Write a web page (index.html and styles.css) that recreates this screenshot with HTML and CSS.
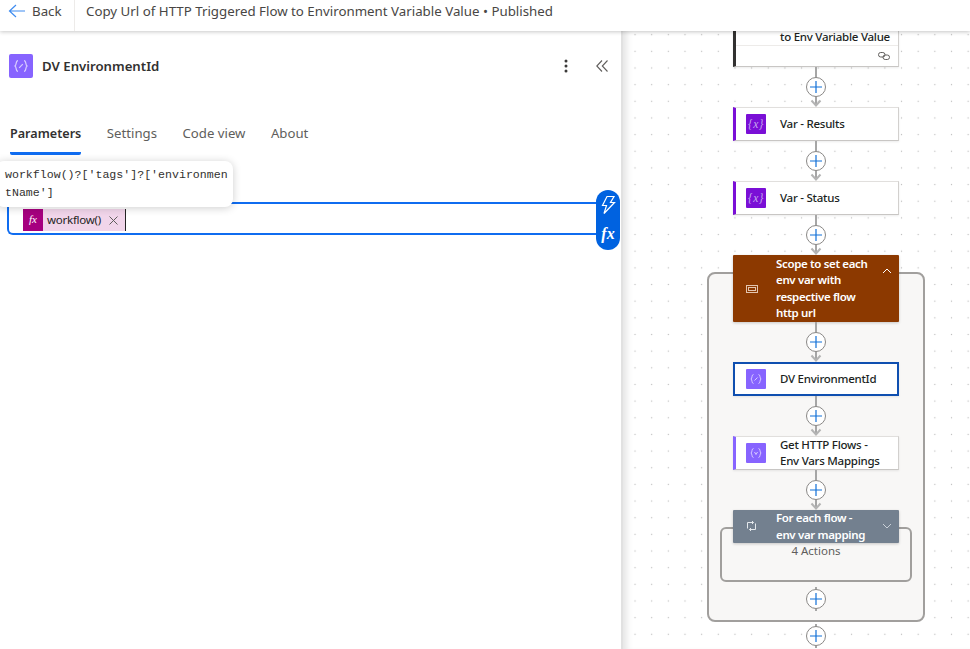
FILE: index.html
```html
<!DOCTYPE html>
<html lang="en">
<head>
<meta charset="utf-8">
<title>Copy Url of HTTP Triggered Flow to Environment Variable Value</title>
<link rel="stylesheet" href="styles.css">
</head>
<body>
<svg class="defs" width="0" height="0" aria-hidden="true">
  <defs>
    <symbol id="link" viewBox="0 0 24 40">
      <path d="M12 0V38" stroke="#a6a6a6" stroke-width="2" fill="none"/>
      <path d="M7.5 33.5L12 38.5L16.5 33.5" stroke="#b4b4b4" stroke-width="2" fill="none"/>
      <circle cx="12" cy="20" r="9.5" fill="#fff" stroke="#8a8886"/>
      <path d="M12 14V26M6 20H18" stroke="#1170d8" stroke-width="1.2" fill="none"/>
    </symbol>
    <symbol id="link-plain" viewBox="0 0 24 24">
      <path d="M12 0V24" stroke="#a6a6a6" stroke-width="2" fill="none"/>
      <circle cx="12" cy="12" r="9.5" fill="#fff" stroke="#8a8886"/>
      <path d="M12 6V18M6 12H18" stroke="#1170d8" stroke-width="1.2" fill="none"/>
    </symbol>
    <symbol id="braces" viewBox="0 0 20 20">
      <path d="M7.5 5.5C5.5 5.5 6.4 9.2 5 10C6.4 10.800 5.500 14.500 7.500 14.500M12.500 5.500C14.500 5.500 13.600 9.200 15 10C13.600 10.800 14.500 14.500 12.500 14.500" stroke="#d9ccff" fill="none"/>
    </symbol>
  </defs>
</svg>
<header class="topbar">
  <button class="back">
    <svg class="back-arrow" width="18" height="14" viewBox="0 0 18 14"><path d="M8 1L1.500 7L8 13M1.500 7H17" stroke="#3f8cf0" stroke-width="1.200" fill="none"/></svg>
    <span>Back</span>
  </button>
  <div class="flow-title">Copy Url of HTTP Triggered Flow to Environment Variable Value • Published</div>
</header>
<main class="main">
  <section class="panel">
    <div class="panel-head">
      <span class="panel-icon">
        <svg width="24" height="24" viewBox="0 0 20 20"><use href="#braces"/><path d="M8.500 11.500L11.500 8.500" stroke="#d9ccff" fill="none"/></svg>
      </span>
      <h1 class="panel-title">DV EnvironmentId</h1>
      <svg class="kebab" width="4" height="14" viewBox="0 0 4 14"><circle cx="2" cy="2" r="1.500"/><circle cx="2" cy="7" r="1.500"/><circle cx="2" cy="12" r="1.500"/></svg>
      <svg class="collapse" width="12" height="12" viewBox="0 0 12 12"><path d="M6 .5L.8 6L6 11.500M11.500 .5L6.300 6L11.500 11.500" stroke="#605e5c" stroke-width="1.100" fill="none"/></svg>
    </div>
    <nav class="tabs">
      <span class="tab tab-active">Parameters</span>
      <span class="tab">Settings</span>
      <span class="tab">Code view</span>
      <span class="tab">About</span>
    </nav>
    <div class="editor">
      <div class="tooltip">workflow()?['tags']?['environmentName']</div>
      <div class="input">
        <span class="token">
          <span class="token-icon">fx</span>
          <span class="token-label">workflow()</span>
          <svg class="token-x" width="9" height="9" viewBox="0 0 9 9"><path d="M.5 .5L8.500 8.500M8.500 .5L.5 8.500" stroke="#605e5c" fill="none"/></svg>
        </span>
        <span class="caret"></span>
      </div>
      <div class="pill">
        <svg width="18" height="20" viewBox="0 0 18 20"><path d="M8 1.500H15L11.500 7.500H15.500L5 18.500L7.500 10.500H3.500Z" stroke="#fff" stroke-width="1.200" fill="none"/></svg>
        <span class="pill-fx">fx</span>
      </div>
    </div>
  </section>
  <section class="canvas">
    <div class="flow">
      <div class="group"></div>
      <div class="loop"></div>
      <div class="card card-top bar-dark">
        <div class="card-top-text">to Env Variable Value</div>
        <div class="card-foot">
          <svg width="12" height="8" viewBox="0 0 12 8"><rect x=".5" y=".5" width="6.500" height="4.500" rx="2.200" stroke="#605e5c" fill="none"/><rect x="5" y="3" width="6.500" height="4.500" rx="2.200" stroke="#605e5c" fill="none"/></svg>
        </div>
      </div>
      <svg class="link"><use href="#link"/></svg>
      <div class="card bar-var">
        <span class="icon icon-var">{x}</span>
        <span class="label">Var - Results</span>
      </div>
      <svg class="link"><use href="#link"/></svg>
      <div class="card bar-var">
        <span class="icon icon-var">{x}</span>
        <span class="label">Var - Status</span>
      </div>
      <svg class="link"><use href="#link"/></svg>
      <div class="block block-scope">
        <svg class="block-icon" width="12" height="8" viewBox="0 0 12 8"><rect x=".5" y=".5" width="11" height="7" stroke="#e3c4ae" fill="none"/><rect x="2.500" y="2.500" width="7" height="3" stroke="#e3c4ae" fill="none"/></svg>
        <span class="block-text">Scope to set each<br>env var with<br>respective flow<br>http url</span>
        <svg class="chevron chevron-up" width="10" height="6" viewBox="0 0 10 6"><path d="M1 5L5 1L9 5" stroke="#fff" fill="none"/></svg>
      </div>
      <svg class="link"><use href="#link"/></svg>
      <div class="card card-selected">
        <span class="icon icon-data">
          <svg width="20" height="20" viewBox="0 0 20 20"><use href="#braces"/><path d="M8.500 11.500L11.500 8.500" stroke="#d9ccff" fill="none"/></svg>
        </span>
        <span class="label">DV EnvironmentId</span>
      </div>
      <svg class="link"><use href="#link"/></svg>
      <div class="card bar-data">
        <span class="icon icon-data">
          <svg width="20" height="20" viewBox="0 0 20 20"><use href="#braces"/><path d="M8.500 9L10 11.500L11.500 9" stroke="#d9ccff" fill="none"/></svg>
        </span>
        <span class="label">Get HTTP Flows -<br>Env Vars Mappings</span>
      </div>
      <svg class="link"><use href="#link"/></svg>
      <div class="block block-loop">
        <svg class="block-icon" width="11" height="10" viewBox="0 0 11 10"><path d="M1.500 7.500V1.500H7.500M6 0L7.500 1.500L6 3M9.500 2.500V8.500H3.500M5 7L3.500 8.500L5 10" stroke="#e4e8ec" fill="none"/></svg>
        <span class="block-text">For each flow -<br>env var mapping</span>
        <svg class="chevron" width="10" height="6" viewBox="0 0 10 6"><path d="M1 1L5 5L9 1" stroke="#c9d0d8" fill="none"/></svg>
      </div>
      <div class="actions">4 Actions</div>
      <svg class="link link-inner"><use href="#link-plain"/></svg>
      <svg class="link link-outer"><use href="#link-plain"/></svg>
    </div>
  </section>
</main>
</body>
</html>
```
FILE: styles.css
```css
* { box-sizing: border-box; }
html, body { height: 100%; }
body {
  margin: 0;
  overflow: hidden;
  display: flex;
  flex-direction: column;
  background: #fff;
  color: #242424;
  font-family: "Noto Sans", "Open Sans", "Liberation Sans", sans-serif;
}
.defs { position: absolute; }

.topbar {
  position: relative;
  z-index: 3;
  flex: none;
  height: 31px;
  display: flex;
  align-items: center;
  background: #fff;
  box-shadow: 0 1px 4px rgba(0, 0, 0, .22);
  font-size: 13.3px;
  color: #484644;
}
.back {
  display: flex;
  align-items: center;
  gap: 6px;
  height: 31px;
  width: 75px;
  padding: 0 0 9px 8px;
  border: 0;
  border-right: 1px solid #edebe9;
  background: none;
  font: inherit;
  color: inherit;
}
.flow-title { margin: 0 0 9px 11px; white-space: nowrap; }

.main { flex: 1; display: flex; min-height: 0; }

.panel {
  flex: none;
  width: 623px;
  border-right: 2px solid #e1e1e1;
  background: #fff;
}
.panel-head {
  display: flex;
  align-items: center;
  height: 24px;
  margin: 23px 0 0 9px;
}
.panel-icon {
  display: flex;
  width: 24px;
  height: 24px;
  border-radius: 2px;
  background: #8764ff;
}
.panel-title {
  margin: 0 0 0 9px;
  flex: 1;
  font-size: 13.2px;
  font-weight: 600;
  color: #323130;
}
.kebab { fill: #3b3a39; margin-right: 28px; }
.collapse { margin-right: 13px; }

.tabs {
  display: flex;
  gap: 25.5px;
  margin: 45px 0 0 10px;
  font-size: 13.2px;
  color: #605e5c;
}
.tab { height: 32px; line-height: 20px; }
.tab-active {
  font-size: 12.6px;
  line-height: 21px;
  font-weight: 600;
  color: #323130;
  border-bottom: 3px solid #0f6cf0;
  border-radius: 0 0 2px 2px;
}

.editor { position: relative; height: 96px; }
.tooltip {
  position: absolute;
  z-index: 2;
  left: -4px;
  top: 6px;
  width: 237px;
  height: 46px;
  padding: 5px 4px 0 9px;
  border-radius: 8px;
  background: #fff;
  box-shadow: 0 1px 8px rgba(0, 0, 0, .2);
  font: 11.6px/17.5px "Liberation Mono", monospace;
  word-break: break-all;
  color: #323130;
}
.input {
  position: absolute;
  left: 7px;
  top: 47px;
  width: 597px;
  height: 33px;
  padding: 5px 0 0 14px;
  display: flex;
  align-items: flex-start;
  border: 2px solid #0f6cf0;
  border-right: 0;
  border-radius: 0 0 0 6px;
}
.token {
  display: flex;
  align-items: center;
  height: 22px;
  width: 102px;
  background: #f1d5ea;
}
.token-icon {
  width: 20px;
  height: 22px;
  background: #a6007f;
  color: #fff;
  font: italic 11px/21px "Liberation Serif", serif;
  text-align: center;
}
.token-label { margin: -2px 0 0 4px; font-size: 11.5px; letter-spacing: -.25px; }
.token-x { margin-left: 8px; }
.caret { width: 1px; height: 22px; background: #242424; }
.pill {
  position: absolute;
  left: 596px;
  top: 35px;
  width: 24px;
  height: 60px;
  display: flex;
  flex-direction: column;
  align-items: center;
  justify-content: space-between;
  padding: 5px 0 6px;
  border-radius: 12px;
  background: #0062e0;
  color: #fff;
}
.pill-fx { font: italic 700 16px/20px "Liberation Serif", serif; }

.canvas {
  position: relative;
  flex: 1;
  overflow: hidden;
  background-color: #fff;
  background-image: radial-gradient(circle, #bdbdbd .8px, transparent 1px);
  background-size: 16.67px 16.67px;
  background-position: 3.7px 12px;
  box-shadow: inset 8px 0 6px -4px rgba(0, 0, 0, .1);
}
.flow {
  position: relative;
  width: 166px;
  margin: 0 0 0 110px;
  display: flex;
  flex-direction: column;
  align-items: center;
}
.group {
  position: absolute;
  left: -26px;
  top: 241px;
  width: 218px;
  height: 350px;
  border: 2px solid #a19f9d;
  border-radius: 8px;
  background: #f8f7f6;
}
.loop {
  position: absolute;
  left: -13px;
  top: 496px;
  width: 192px;
  height: 55px;
  border: 2px solid #a19f9d;
  border-radius: 6px;
}
.link { position: relative; flex: none; width: 24px; height: 40px; }
.link-inner { position: absolute; left: 71px; top: 556px; width: 24px; height: 24px; }
.link-outer { position: absolute; left: 71px; top: 593px; width: 24px; height: 24px; }

.card {
  position: relative;
  flex: none;
  width: 166px;
  height: 34px;
  display: flex;
  align-items: center;
  padding-left: 10px;
  background: #fff;
  border: 1px solid #e1dfdd;
  border-bottom-color: #c8c6c4;
  border-right-color: #d2d0ce;
  box-shadow: 0 1px 2px rgba(0, 0, 0, .08);
  font-size: 11.5px;
  font-weight: 500;
  letter-spacing: -.25px;
  line-height: 16px;
  color: #201f1e;
}
.card-top {
  height: 36px;
  display: block;
  padding: 0 0 0 44px;
  border-top: 0;
}
.card-top-text { height: 14px; line-height: 12px; white-space: nowrap; }
.card-foot {
  height: 21px;
  margin-left: -44px;
  display: flex;
  align-items: center;
  justify-content: flex-end;
  padding-right: 8px;
  border-top: 1px solid #edebe9;
}
.bar-dark { border-left: 3px solid #323130; }
.bar-var { border-left: 3px solid #7a0fd6; }
.bar-data { border-left: 3px solid #8764ff; }
.card-selected { border: 2px solid #0f4fb0; }
.icon {
  flex: none;
  width: 20px;
  height: 20px;
  display: flex;
  align-items: center;
  justify-content: center;
  border-radius: 1px;
}
.icon-var {
  background: #7a0fd6;
  color: #c6a8ee;
  font: italic 11.5px/20px "Liberation Serif", serif;
  letter-spacing: .5px;
}
.icon-data { background: #8764ff; }
.label { margin-left: 14px; white-space: nowrap; }
.card-selected .icon { margin-left: 1px; }

.block {
  position: relative;
  flex: none;
  width: 166px;
  display: flex;
  align-items: center;
  color: #fff;
  font-size: 11.5px;
  font-weight: 600;
  letter-spacing: -.35px;
  line-height: 16.5px;
  box-shadow: 0 1px 3px rgba(0, 0, 0, .2);
  border-radius: 1px;
}
.block-scope { height: 67px; background: #8c3900; }
.block-loop { height: 33px; background: #73808f; }
.block-icon { position: absolute; left: 13px; top: 30px; }
.block-loop .block-icon { top: 11px; }
.block-text { margin-left: 43px; white-space: nowrap; }
.chevron { position: absolute; right: 7px; top: 13px; }
.actions {
  position: relative;
  font-size: 11.5px;
  line-height: 16px;
  color: #605e5c;
}
```
